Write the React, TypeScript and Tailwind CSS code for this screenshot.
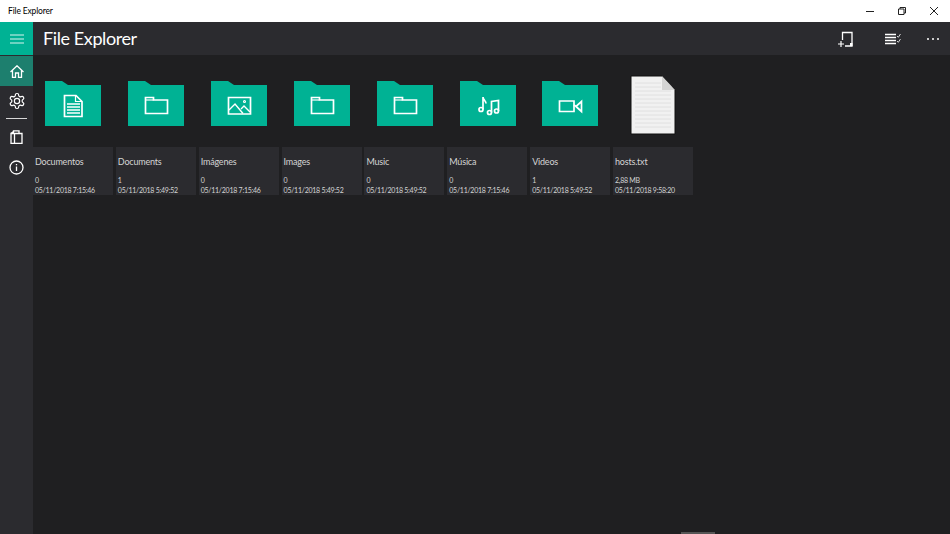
import React from "react";

type Kind = "doc" | "folder" | "image" | "music" | "video" | "file";

const items: { name: string; count: string; date: string; kind: Kind }[] = [
  { name: "Documentos", count: "0", date: "05/11/2018 7:15:46", kind: "doc" },
  { name: "Documents", count: "1", date: "05/11/2018 5:49:52", kind: "folder" },
  { name: "Imágenes", count: "0", date: "05/11/2018 7:15:46", kind: "image" },
  { name: "Images", count: "0", date: "05/11/2018 5:49:52", kind: "folder" },
  { name: "Music", count: "0", date: "05/11/2018 5:49:52", kind: "folder" },
  { name: "Música", count: "0", date: "05/11/2018 7:15:46", kind: "music" },
  { name: "Videos", count: "1", date: "05/11/2018 5:49:52", kind: "video" },
  { name: "hosts.txt", count: "2,88 MB", date: "05/11/2018 9:58:20", kind: "file" },
];

function Glyph({ kind }: { kind: Kind }) {
  const line = { fill: "none", stroke: "#fff", strokeWidth: 1.7 };
  if (kind === "doc")
    return (
      <g {...line}>
        <path d="M19.500 14.500h11.500l6 6v15h-17.500z" />
        <path d="M30.500 14.500v6h6.500" strokeWidth="1.200" />
        <path d="M22 23h13M22 26h13M22 29h13M22 32h13" strokeWidth="1.300" />
      </g>
    );
  if (kind === "folder")
    return (
      <g {...line}>
        <path d="M17.500 16.500h8v2.500h14v13.500h-22z" />
        <path d="M17.500 19h8" strokeWidth="1.200" />
      </g>
    );
  if (kind === "image")
    return (
      <g {...line}>
        <path d="M17.500 16.500h22v16.500h-22z" />
        <path d="M18 29l6-6 8 9.500M30 28l3-3 6 6" strokeWidth="1.400" />
        <circle cx="33.500" cy="20.500" r="1" strokeWidth="1.100" />
      </g>
    );
  if (kind === "music")
    return (
      <g {...line}>
        <circle cx="21" cy="28.500" r="2" />
        <circle cx="29.500" cy="31.500" r="2" />
        <circle cx="36.500" cy="30" r="2" />
        <path d="M23 28.500V16c0 3 3 3.500 3 6.500" />
        <path d="M31.500 31.500V20.500l7-1v10.500" />
      </g>
    );
  return (
    <g {...line}>
      <path d="M17.500 20h14.500v10.500H17.500z" />
      <path d="M32 24l2 1.500 5.500-5v10l-5.500-5" />
    </g>
  );
}

function Thumb({ kind }: { kind: Kind }) {
  if (kind === "file") {
    return (
      <svg width="46" height="60" viewBox="0 0 46 60" className="mt-[-6px]">
        <path d="M1 1h31l13 14v44H1z" fill="#f1f1f1" stroke="#111" strokeWidth="1" />
        <path d="M32 1v14h13z" fill="#d4d4d4" />
        <path
          d="M5 8h26M5 12h26M5 16h36M5 20h36M5 24h36M5 28h36M5 32h36M5 36h36M5 40h36M5 44h36M5 48h36M5 52h36"
          stroke="#e0e0e0"
          strokeWidth="1"
        />
      </svg>
    );
  }
  return (
    <svg width="56" height="45" viewBox="0 0 56 45">
      <path d="M0 0h17l6 4h33v41H0z" fill="#00b294" />
      <Glyph kind={kind} />
    </svg>
  );
}

function SideButton({ children, active }: { children: React.ReactNode; active?: boolean }) {
  return (
    <div className={`flex h-[30px] items-center justify-center ${active ? "bg-[#1d7f6e]" : ""}`}>
      {children}
    </div>
  );
}

const stroke = { fill: "none", stroke: "#fff", strokeWidth: 1.3 };

export default function App() {
  return (
    <div
      className="flex h-screen w-full flex-col overflow-hidden bg-[#1f1f21] text-white"
      style={{ fontFamily: 'Lato, "Noto Sans", sans-serif' }}
    >
      {/* title bar */}
      <div className="flex h-[22px] shrink-0 items-center justify-between bg-white pl-2 text-[8.500px] tracking-[-0.15px] text-black">
        <span>File Explorer</span>
        <div className="flex items-center">
          <div className="flex w-[32px] justify-center">
            <svg width="10" height="10" viewBox="0 0 10 10">
              <path d="M1 5.500h8" stroke="#222" strokeWidth="1" />
            </svg>
          </div>
          <div className="flex w-[32px] justify-center">
            <svg width="10" height="10" viewBox="0 0 10 10" fill="none" stroke="#222" strokeWidth="1">
              <path d="M1.500 3h5.500v5.500H1.500zM3 3V1.500h5.500V7H7" />
            </svg>
          </div>
          <div className="flex w-[32px] justify-center pr-[1px]">
            <svg width="10" height="10" viewBox="0 0 10 10">
              <path d="M1 1l8 8M9 1l-8 8" stroke="#222" strokeWidth="1" />
            </svg>
          </div>
        </div>
      </div>

      <div className="flex min-h-0 flex-1">
        {/* sidebar */}
        <div className="flex w-[33px] shrink-0 flex-col bg-[#2b2b2f]">
          <div className="mb-[1px] flex h-[33px] items-center justify-center bg-[#00b294]">
            <svg width="14" height="10" viewBox="0 0 14 10">
              <path d="M0 1h14M0 5h14M0 9h14" stroke="#fff" strokeWidth="1" strokeOpacity="0.85" />
            </svg>
          </div>
          <SideButton active>
            <svg width="14" height="13" viewBox="0 0 14 13" {...stroke}>
              <path d="M.5 7L7 .8 13.500 7M2.500 5.500V12.300h3V8h3v4.300h3V5.500" />
            </svg>
          </SideButton>
          <SideButton>
            <svg width="18" height="18" viewBox="0 0 24 24" fill="none" stroke="#fff" strokeWidth="1.600">
              <path d="M12.220 2h-.44a2 2 0 0 0-2 2v.18a2 2 0 0 1-1 1.730l-.43.25a2 2 0 0 1-2 0l-.15-.08a2 2 0 0 0-2.730.73l-.22.380a2 2 0 0 0 .730 2.730l.15.100a2 2 0 0 1 1 1.720v.510a2 2 0 0 1-1 1.740l-.15.090a2 2 0 0 0-.730 2.730l.22.380a2 2 0 0 0 2.730.730l.15-.08a2 2 0 0 1 2 0l.43.250a2 2 0 0 1 1 1.730V20a2 2 0 0 0 2 2h.44a2 2 0 0 0 2-2v-.18a2 2 0 0 1 1-1.730l.43-.25a2 2 0 0 1 2 0l.15.080a2 2 0 0 0 2.730-.730l.22-.390a2 2 0 0 0-.730-2.730l-.15-.08a2 2 0 0 1-1-1.740v-.500a2 2 0 0 1 1-1.740l.15-.090a2 2 0 0 0 .730-2.730l-.22-.380a2 2 0 0 0-2.730-.730l-.15.080a2 2 0 0 1-2 0l-.43-.250a2 2 0 0 1-1-1.730V4a2 2 0 0 0-2-2z" />
              <circle cx="12" cy="12" r="3.500" />
            </svg>
          </SideButton>
          <div className="mx-[6px] mt-[2px] mb-[3px] h-px bg-[#d8d8d8]" />
          <SideButton>
            <svg width="13" height="14" viewBox="0 0 13 14" {...stroke}>
              <path d="M1 3.500h3.500V13.500H1zM4.500 3.500H12V13.500H4.500z" />
              <path d="M1 3.500L3.500 1.500M3.500 3.500V.8h5.500v2.700" />
            </svg>
          </SideButton>
          <SideButton>
            <svg width="15" height="15" viewBox="0 0 15 15" {...stroke}>
              <circle cx="7.500" cy="7.500" r="6.500" />
              <path d="M7.500 6.500v4.500M7.500 4v1.200" />
            </svg>
          </SideButton>
        </div>

        <div className="flex min-w-0 flex-1 flex-col">
          {/* top bar */}
          <div className="flex h-[33px] shrink-0 items-center justify-between bg-[#2b2b2f] pl-[10px]">
            <span className="pb-[2px] text-[18px] leading-none tracking-[-0.4px]">File Explorer</span>
            <div className="flex items-center">
              <svg width="16" height="16" viewBox="0 0 16 16" className="mr-[31px]">
                <path d="M4.500 9V1.500H14V15H7" fill="none" stroke="#fff" strokeWidth="1.300" />
                <path d="M0 13h6M3 10v6" fill="none" stroke="#fff" strokeWidth="1.200" />
                <path d="M12 12h2.500v3H12z" fill="#fff" />
              </svg>
              <svg width="16" height="12" viewBox="0 0 16 12" className="mr-[26px]">
                <path d="M0 1.500h11M0 4.500h11M0 7.500h11M0 10.500h11" stroke="#fff" strokeWidth="1.300" />
                <path d="M12 3l1.300 1.300L15.500 1M12 8l1.300 1.300L15.500 6" fill="none" stroke="#fff" strokeWidth="0.800" />
              </svg>
              <div className="mr-[11px] flex gap-[3px]">
                <span className="h-[2px] w-[2px] rounded-full bg-white" />
                <span className="h-[2px] w-[2px] rounded-full bg-white" />
                <span className="h-[2px] w-[2px] rounded-full bg-white" />
              </div>
            </div>
          </div>

          {/* file grid */}
          <div className="grid grid-cols-[repeat(8,80px)] gap-x-[2.86px] pt-[26px]">
            {items.map((item) => (
              <div key={item.name} className="flex flex-col">
                <div className="flex h-[66px] justify-center pl-[0.600px]">
                  <Thumb kind={item.kind} />
                </div>
                <div className="h-[48px] bg-[#2b2b2f] pl-[2px] pt-[8px] text-[#d4d4d4]">
                  <div className="text-[9px] leading-[13px] tracking-[-0.2px]">{item.name}</div>
                  <div className="mt-[7px] text-[7px] leading-[10px] tracking-[-0.25px]">{item.count}</div>
                  <div className="text-[7px] leading-[10px] tracking-[-0.25px]">{item.date}</div>
                </div>
              </div>
            ))}
          </div>
        </div>
      </div>

      {/* scrollbar thumb at the bottom edge */}
      <div className="pointer-events-none absolute bottom-0 left-[681px] h-[2px] w-[34px] bg-[#555]" />
    </div>
  );
}
